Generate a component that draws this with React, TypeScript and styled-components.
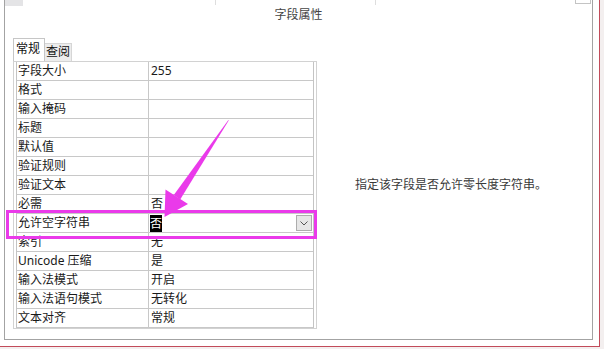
import React from "react";
import styled, { createGlobalStyle } from "styled-components";

const Global = createGlobalStyle`
  html, body { margin: 0; padding: 0; background: #fff; }
  body { font-family: "Noto Sans", "Noto Sans CJK SC", sans-serif; }
`;

const Page = styled.div`
  position: relative;
  width: 604px;
  height: 349px;
  background: #f3efef;
  overflow: hidden;
`;

const Window = styled.div`
  width: 599px;
  height: 346px;
  background: #fff;
  border-right: 1px solid #c24b5a;
  border-bottom: 1px solid #c24b5a;
`;

const Frame = styled.div`
  margin-left: 4px;
  width: 587px;
  height: 339px;
  border-left: 1px solid #a3a3a3;
  border-right: 1px solid #a3a3a3;
  border-bottom: 1px solid #a3a3a3;
  display: flex;
  flex-direction: column;
`;

const DecorRow = styled.div`
  height: 6px;
  display: flex;
  align-items: flex-start;
`;

const DecorTab = styled.div`
  width: 18px;
  height: 6px;
  background: #e4e4e6;
`;

const DecorSep = styled.div<{ $ml: number }>`
  margin-left: ${(p) => p.$ml}px;
  width: 1px;
  height: 5px;
  background: #dedede;
`;

const DecorBox = styled.div<{ $ml: number }>`
  margin-left: ${(p) => p.$ml}px;
  width: 14px;
  height: 3px;
  border: 1px solid #c4c4c4;
  border-top: none;
`;

const Title = styled.div`
  height: 18px;
  line-height: 18px;
  text-align: center;
  font-size: 12px;
  color: #444;
`;

const Body = styled.div`
  display: flex;
  margin-top: 14px;
  padding-left: 8px;
`;

const LeftCol = styled.div`
  width: 304px;
  display: flex;
  flex-direction: column;
`;

const TabRow = styled.div`
  height: 23px;
  display: flex;
  align-items: flex-end;
`;

const Tab = styled.div<{ $active?: boolean }>`
  box-sizing: border-box;
  height: ${(p) => (p.$active ? 23 : 18)}px;
  width: ${(p) => (p.$active ? 32 : 27)}px;
  border: 1px solid ${(p) => (p.$active ? "#c6c6c6" : "#d6d6d6")};
  border-bottom: none;
  ${(p) => (p.$active ? "" : "border-left: none;")}
  background: ${(p) => (p.$active ? "#fff" : "#ececec")};
  font-size: 12px;
  color: #111;
  line-height: ${(p) => (p.$active ? 20 : 16)}px;
  padding-left: ${(p) => (p.$active ? 2 : 1)}px;
`;

const TableFrame = styled.div`
  box-sizing: border-box;
  width: 304px;
  border: 1px solid #d2d2d2;
  padding: 0 2px;
`;

const Grid = styled.div`
  border-left: 1px solid #c4c4c4;
  border-right: 1px solid #c4c4c4;
`;

const Row = styled.div`
  box-sizing: border-box;
  height: 19px;
  display: grid;
  grid-template-columns: 132px 1fr;
  border-bottom: 1px solid #c8c8c8;
  font-size: 12px;
  line-height: 18px;
  color: #1a1a1a;
`;

const LabelCell = styled.div`
  border-right: 1px solid #c8c8c8;
  padding-left: 1px;
  white-space: nowrap;
`;

const ValueCell = styled.div`
  padding-left: 2px;
  display: flex;
  align-items: center;
  justify-content: space-between;
  white-space: nowrap;
`;

const Selected = styled.span`
  display: inline-block;
  height: 17px;
  line-height: 17px;
  background: #000;
  color: #fff;
  margin-left: -1px;
`;

const DropButton = styled.div`
  box-sizing: border-box;
  width: 16px;
  height: 16px;
  margin-right: 1px;
  background: #e6e6e6;
  border: 1px solid #adadad;
  display: flex;
  align-items: center;
  justify-content: center;
`;

const RightCol = styled.div`
  flex: 1;
  display: flex;
  align-items: center;
  padding-left: 38px;
  font-size: 12px;
  color: #3a3a3a;
`;

const Highlight = styled.div`
  position: absolute;
  left: 6px;
  top: 210px;
  width: 311px;
  height: 29px;
  box-sizing: border-box;
  border: 3px solid #ea3aea;
`;

const ArrowSvg = styled.svg`
  position: absolute;
  left: 0;
  top: 0;
  pointer-events: none;
`;

const rows: [string, string][] = [
  ["字段大小", "255"],
  ["格式", ""],
  ["输入掩码", ""],
  ["标题", ""],
  ["默认值", ""],
  ["验证规则", ""],
  ["验证文本", ""],
  ["必需", "否"],
  ["允许空字符串", "__SEL__"],
  ["索引", "无"],
  ["Unicode 压缩", "是"],
  ["输入法模式", "开启"],
  ["输入法语句模式", "无转化"],
  ["文本对齐", "常规"],
];

export default function App() {
  return (
    <Page>
      <Global />
      <Window>
        <Frame>
          <DecorRow>
            <DecorTab />
            <DecorSep $ml={192} />
            <DecorSep $ml={159} />
            <DecorBox $ml={199} />
          </DecorRow>
          <Title>字段属性</Title>
          <Body>
            <LeftCol>
              <TabRow>
                <Tab $active>常规</Tab>
                <Tab>查阅</Tab>
              </TabRow>
              <TableFrame>
                <Grid>
                  {rows.map(([label, value]) => (
                    <Row key={label}>
                      <LabelCell>{label}</LabelCell>
                      {value === "__SEL__" ? (
                        <ValueCell>
                          <Selected>否</Selected>
                          <DropButton>
                            <svg width="8" height="5" viewBox="0 0 8 5">
                              <polyline points="0.5,0.5 4,4 7.5,0.5" fill="none" stroke="#555" strokeWidth="1" />
                            </svg>
                          </DropButton>
                        </ValueCell>
                      ) : (
                        <ValueCell>{value}</ValueCell>
                      )}
                    </Row>
                  ))}
                </Grid>
              </TableFrame>
            </LeftCol>
            <RightCol>指定该字段是否允许零长度字符串。</RightCol>
          </Body>
        </Frame>
      </Window>
      <Highlight />
      <ArrowSvg width="604" height="349" viewBox="0 0 604 349">
        <polygon
          points="229,120 228,120.6 173.8,195.0 180.2,199.6"
          fill="#ea3aea"
        />
        <polygon points="164.5,217 165.5,189.5 188,204" fill="#ea3aea" />
      </ArrowSvg>
    </Page>
  );
}
